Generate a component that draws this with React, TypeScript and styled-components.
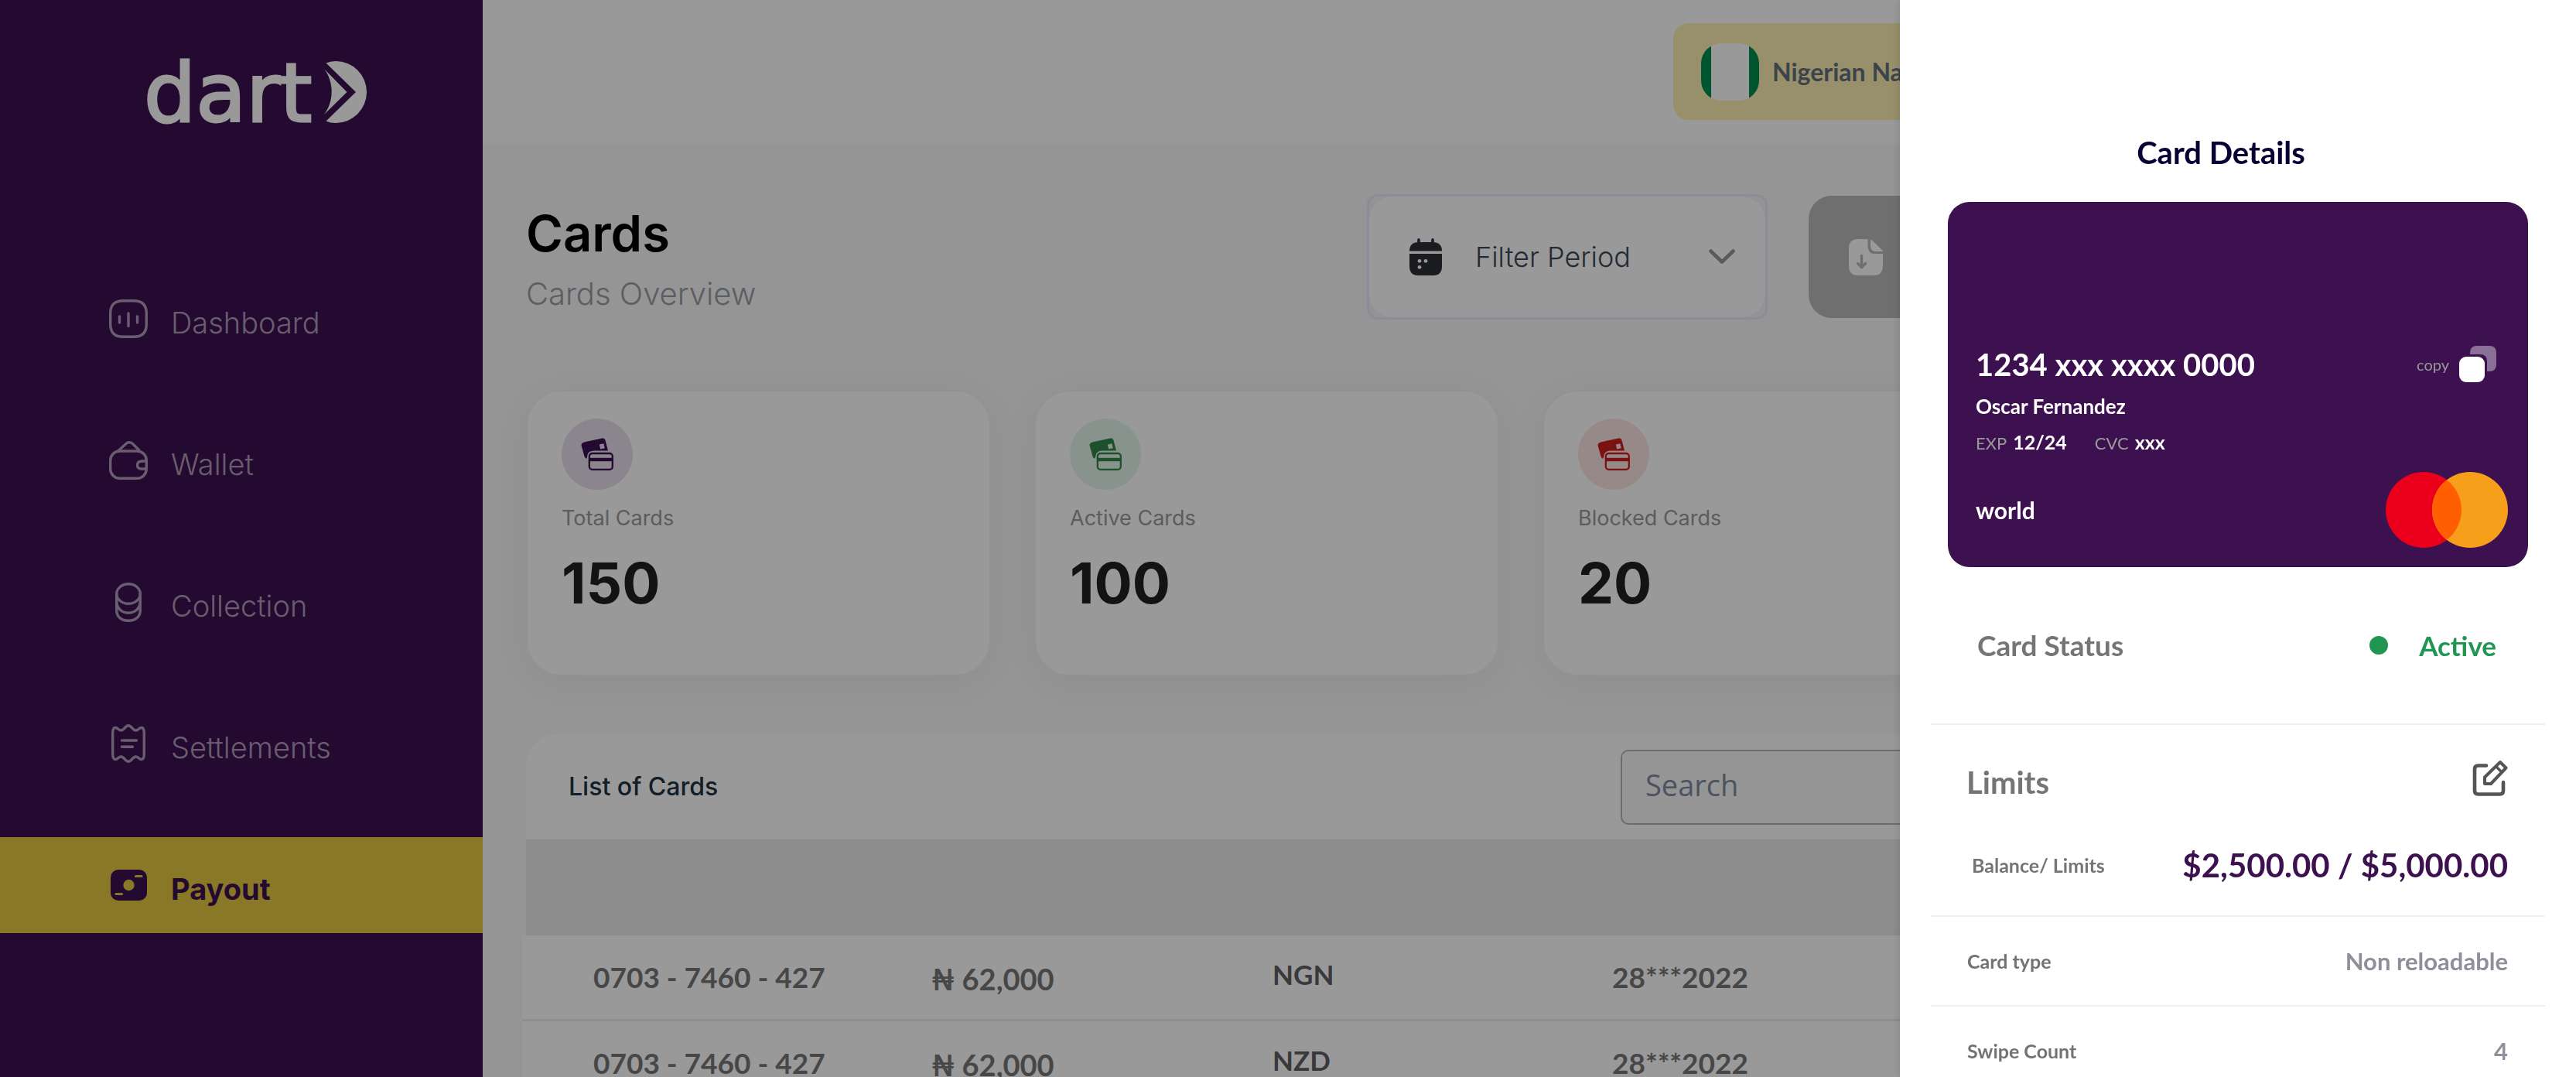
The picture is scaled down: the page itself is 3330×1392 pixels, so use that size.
import React from "react";
import styled, { createGlobalStyle } from "styled-components";

const purple = "#3d1150";
const ui = `Inter, "Liberation Sans", sans-serif`;
const geo = `Lato, "Liberation Sans", sans-serif`;

const GlobalStyle = createGlobalStyle`
  *, *::before, *::after { box-sizing: border-box; }
  body { margin: 0; font-family: ${ui}; background: #f8f8f8; }
  button, input, select { font: inherit; color: inherit; }
  h1, h2, h3, p, dl, dt, dd { margin: 0; font-weight: inherit; }
`;

const Shell = styled.div`
  display: flex;
  height: 100vh;
  overflow: hidden;
`;

/* Sidebar */

const Sidebar = styled.aside`
  flex: none;
  width: 624px;
  padding-top: 79px;
  background: ${purple};
`;

const Logo = styled.a`
  display: flex;
  gap: 16px;
  height: 84px;
  padding-left: 186px;
  color: #fff;
  text-decoration: none;
`;

const Wordmark = styled.span`
  font: 400 106px/84px "DejaVu Sans", sans-serif;
  -webkit-text-stroke: 3px #fff;
`;

const Nav = styled.nav`
  display: flex;
  flex-direction: column;
  gap: 59px;
  margin-top: 187px;
`;

const NavLink = styled.a<{ $active?: boolean }>`
  display: flex;
  align-items: center;
  gap: 30px;
  height: 124px;
  padding-left: 141px;
  font-size: 38px;
  font-weight: ${(p) => (p.$active ? 700 : 300)};
  line-height: 48px;
  text-decoration: none;
  color: ${(p) => (p.$active ? purple : "#b09dba")};
  background: ${(p) => (p.$active ? "#e3c844" : "transparent")};
`;

const NavIcon = styled.span`
  display: flex;
  justify-content: center;
  width: 50px;
`;

const NavLabel = styled.span`
  padding-top: 10px;
`;

/* Main column */

const Page = styled.div`
  flex: 1;
  min-width: 0;
`;

const TopBar = styled.header`
  display: flex;
  align-items: center;
  justify-content: flex-end;
  height: 185px;
  padding-right: 772px;
  background: #fff;
`;

const Currency = styled.button`
  display: flex;
  align-items: center;
  gap: 17px;
  width: 395px;
  height: 125px;
  padding: 0 36px;
  border: 0;
  border-radius: 20px;
  background: #fdf0b1;
  color: #67717d;
  font: 700 32px/40px ${geo};
`;

const Flag = styled.span`
  display: block;
  width: 75px;
  height: 74px;
  border-radius: 26px;
  background: linear-gradient(to right, #008e53 13px, #fff 13px 62px, #008e53 62px);
`;

const Main = styled.main`
  padding: 66px 78px 0 56px;
`;

const TitleRow = styled.div`
  display: grid;
  grid-template-columns: 1fr 518px 914px;
  column-gap: 53px;
  align-items: center;
`;

const Heading = styled.div`
  display: grid;
  gap: 16px;
  padding-top: 8px;
`;

const Title = styled.h1`
  font-size: 65px;
  font-weight: 600;
  line-height: 72px;
  color: #000;
`;

const Subtitle = styled.p`
  font-size: 40px;
  font-weight: 300;
  line-height: 52px;
  color: #989da3;
`;

const Filter = styled.label`
  height: 162px;
  border: 3px solid #e6e9fb;
  border-radius: 14px;
  background: #f6f6f8;
`;

const FilterInner = styled.span`
  display: flex;
  align-items: center;
  height: 100%;
  padding: 0 39px 0 52px;
  border-radius: 30px;
  background: #fff;
`;

const FilterSelect = styled.select`
  flex: 1;
  margin-left: 43px;
  padding: 0;
  border: 0;
  appearance: none;
  background: transparent;
  color: #3d4854;
  font-size: 36px;
  font-weight: 300;
  line-height: 48px;
`;

const Download = styled.button`
  display: flex;
  align-items: center;
  height: 158px;
  padding: 0 52px;
  border: 0;
  border-radius: 30px;
  background: #b9b9b9;
`;

const Stats = styled.section`
  display: grid;
  grid-template-columns: repeat(4, 1fr);
  gap: 56px;
  margin-top: 91px;
`;

const StatCard = styled.article`
  min-height: 370px;
  padding: 35px 44px;
  border: 2px solid #f4f4f4;
  border-radius: 46px;
  background: #fff;
  box-shadow: 0 8px 48px rgba(0, 0, 0, 0.05);
`;

const StatIcon = styled.div<{ $bg: string; $fg: string }>`
  display: grid;
  place-items: center;
  width: 92px;
  height: 92px;
  border-radius: 50%;
  background: ${(p) => p.$bg};
  color: ${(p) => p.$fg};
`;

const StatLabel = styled.h2`
  margin-top: 19px;
  font-size: 27px;
  line-height: 36px;
  color: #999;
`;

const StatValue = styled.p`
  margin-top: 22px;
  font-size: 73px;
  font-weight: 700;
  line-height: 88px;
  color: #231f20;
`;

const Panel = styled.section`
  margin-top: 75px;
  border-radius: 40px 40px 0 0;
  background: #fff;
`;

const PanelHead = styled.div`
  display: flex;
  align-items: center;
  justify-content: space-between;
  height: 136px;
  padding: 0 57px 0 55px;
`;

const PanelTitle = styled.h2`
  font-size: 32px;
  font-weight: 500;
  line-height: 40px;
  color: #213243;
`;

const Search = styled.input`
  width: 1100px;
  height: 97px;
  padding: 0 30px 6px;
  border: 2px solid #b5b5b5;
  border-radius: 10px;
  background: #f8f8f8;
  font: 400 38px/48px "Open Sans", sans-serif;
  &::placeholder {
    color: #7f8aa0;
    opacity: 1;
  }
`;

const HeadStrip = styled.div`
  height: 124px;
  border-top: 2px solid #e6ecf0;
  border-bottom: 3px solid #e8e8f0;
  background: #ebebeb;
`;

const Table = styled.table`
  width: calc(100% + 5px);
  margin-left: -5px;
  border-collapse: separate;
  border-spacing: 0;
  table-layout: fixed;
  background: #fff;
`;

const Col = styled.col`
  width: 439px;
`;

const Cell = styled.td`
  height: 111px;
  padding: 0 0 0 92px;
  border-bottom: 3px solid #efebf2;
  color: #777;
  font: 700 37px/48px ${geo};
  white-space: nowrap;
`;

const AmountCell = styled(Cell)`
  padding: 4px 0 0 90px;
  font-size: 38px;
`;

const CodeCell = styled(Cell)`
  padding-bottom: 8px;
  font-size: 35px;
  color: #5f5f67;
`;

/* Overlay and drawer */

const Scrim = styled.div`
  position: fixed;
  inset: 0;
  background: rgba(0, 0, 0, 0.4);
`;

const Drawer = styled.aside`
  position: fixed;
  top: 0;
  right: 0;
  bottom: 0;
  width: 874px;
  padding: 173px 40px 0;
  overflow: hidden;
  background: #fff;
  box-shadow: 0 0 12px rgba(0, 0, 0, 0.15);
  font-family: ${geo};
`;

const DrawerTitle = styled.h2`
  padding-right: 44px;
  text-align: center;
  font-size: 40px;
  font-weight: 700;
  line-height: 48px;
  color: #0a0033;
`;

const BankCard = styled.div`
  display: flex;
  flex-direction: column;
  justify-content: flex-end;
  height: 472px;
  margin: 40px 22px 0;
  padding: 0 26px 25px 36px;
  border-radius: 28px;
  background: ${purple};
  color: #fff;
`;

const CardRow = styled.div`
  display: flex;
  align-items: center;
  justify-content: space-between;
`;

const CardNumber = styled.p`
  font-size: 40px;
  font-weight: 700;
  line-height: 48px;
`;

const CopyButton = styled.button`
  display: flex;
  align-items: center;
  gap: 13px;
  height: 48px;
  margin-right: 15px;
  padding: 0;
  border: 0;
  background: none;
  color: #999;
  font-size: 20px;
  line-height: 24px;
`;

const Holder = styled.p`
  margin-top: 14px;
  font-size: 26px;
  font-weight: 700;
  line-height: 32px;
`;

const Codes = styled.dl`
  display: flex;
  gap: 36px;
  margin-top: 14px;
`;

const Code = styled.div`
  display: flex;
  align-items: baseline;
  gap: 8px;
  line-height: 32px;
`;

const CodeName = styled.dt`
  font-size: 22px;
  color: #999;
`;

const CodeValue = styled.dd`
  font-size: 25px;
  font-weight: 700;
`;

const BrandRow = styled.div`
  display: flex;
  align-items: center;
  justify-content: space-between;
  margin-top: 21px;
`;

const Tier = styled.span`
  font-size: 30px;
  font-weight: 700;
  line-height: 36px;
`;

const StatusRow = styled.div`
  display: flex;
  align-items: center;
  justify-content: space-between;
  height: 204px;
  padding: 0 63px 0 60px;
  border-bottom: 2px solid #eee;
  font-weight: 700;
  line-height: 48px;
`;

const StatusLabel = styled.h3`
  font-size: 37px;
  color: #757575;
`;

const StatusValue = styled.span`
  display: flex;
  align-items: center;
  gap: 40px;
  font-size: 35px;
  color: #219653;
  &::before {
    content: "";
    width: 24px;
    height: 24px;
    border-radius: 50%;
    background: currentColor;
  }
`;

const LimitsHead = styled.div`
  display: flex;
  align-items: center;
  justify-content: space-between;
  height: 136px;
  padding: 0 48px 0 46px;
`;

const LimitsTitle = styled.h3`
  padding-top: 12px;
  font-size: 40px;
  font-weight: 700;
  line-height: 48px;
  color: #757575;
`;

const EditButton = styled.button`
  display: flex;
  padding: 0;
  border: 0;
  background: none;
  color: #555;
`;

const Balance = styled.dl`
  display: flex;
  align-items: center;
  justify-content: space-between;
  height: 112px;
  padding: 0 48px 20px 53px;
  border-bottom: 2px solid #f1f1f1;
  line-height: 48px;
`;

const BalanceName = styled.dt`
  font-size: 25px;
  font-weight: 700;
  color: #757575;
`;

const BalanceValue = styled.dd`
  font-size: 42px;
  font-weight: 700;
  color: ${purple};
`;

const Detail = styled.dl`
  display: flex;
  align-items: center;
  justify-content: space-between;
  height: 116px;
  padding: 0 48px 0 47px;
  border-bottom: 2px solid #eee;
  line-height: 40px;
`;

const DetailName = styled.dt`
  font-size: 25px;
  font-weight: 700;
  color: #6f756f;
`;

const DetailValue = styled.dd`
  font-size: 31px;
  font-weight: 700;
  color: #8f8f9b;
`;

/* Drawings */

const line = {
  fill: "none",
  stroke: "currentColor",
  strokeWidth: 3.4,
  strokeLinecap: "round" as const,
  strokeLinejoin: "round" as const,
};

const LogoMark = () => (
  <svg width="55" height="80" viewBox="0 0 55 80" fill="currentColor" aria-hidden="true">
    <path d="M2.5 2.5Q8 0 15 0A40 40 0 0 1 15 80Q8 80 2.5 77.5L41 40Z" />
    <path d="M0 10L29.5 40L0 69C13 52 13 27 0 10Z" />
  </svg>
);

const DashboardIcon = () => (
  <svg width="50" height="50" viewBox="0 0 50 50" {...line}>
    <path d="M1.7 25V18Q1.7 1.7 18 1.7H32Q48.3 1.7 48.3 18V32Q48.3 48.3 32 48.3H18Q1.7 48.3 1.7 32Z" />
    <path d="M13.5 22V30M25 18V34.500M36.500 22V30" />
  </svg>
);

const WalletIcon = () => (
  <svg width="50" height="50" viewBox="0 0 50 50" {...line}>
    <rect x="1.7" y="13" width="46.600" height="35.300" rx="12" />
    <path d="M12 12.500L22 3.500Q26 0 30.500 3.500L38.500 11.500" />
    <path d="M48 26H42Q36.500 26.500 36.500 31.200Q36.500 35.800 42 36H48" />
  </svg>
);

const CollectionIcon = () => (
  <svg width="34" height="51" viewBox="0 0 34 51" {...line}>
    <ellipse cx="17" cy="14.500" rx="15.300" ry="12.800" />
    <path d="M1.700 14.500V36C1.700 44 8 49.300 17 49.300S32.300 44 32.300 36V14.500" />
    <path d="M1.700 25.500C2.500 34 9 39.200 17 39.200S31.500 34 32.300 25.500" />
  </svg>
);

const SettlementsIcon = () => (
  <svg width="44" height="50" viewBox="0 0 44 50" {...line}>
    <path d="M1.700 12Q1.700 4.500 5 4.500C8.500 4.500 9 8 12.500 8C16.500 8 18 1.700 22 1.700S27.500 8 31.500 8C35 8 35.500 4.500 39 4.500Q42.300 4.500 42.300 12V38Q42.300 45.500 39 45.500C35.500 45.500 35 42 31.500 42C27.500 42 26 48.300 22 48.300S16.500 42 12.500 42C9 42 8.500 45.500 5 45.500Q1.700 45.500 1.700 38Z" />
    <path d="M13.500 21H32.500M13.500 29.200H27.500" />
  </svg>
);

const PayoutIcon = () => (
  <svg width="47" height="40" viewBox="0 0 47 40" aria-hidden="true">
    <rect width="47" height="40" rx="10" fill="currentColor" />
    <circle cx="23.500" cy="20" r="7.200" fill="#e3c844" />
    <path d="M32.500 8.500H40M7 31.500H14.500" stroke="#e3c844" strokeWidth="3.200" strokeLinecap="round" />
  </svg>
);

const CalendarIcon = () => (
  <svg width="42" height="48" viewBox="0 0 42 48" aria-hidden="true">
    <path d="M12 1.800V8M30 1.800V8" stroke="#2d2f36" strokeWidth="3.600" strokeLinecap="round" />
    <path d="M0 16.500Q0 5 12 5H30Q42 5 42 16.500ZM0 20H42V36Q42 48 31 48H11Q0 48 0 36Z" fill="#2d2f36" />
    <circle cx="13" cy="29.300" r="2.400" fill="#fff" />
    <circle cx="21" cy="29.300" r="2.400" fill="#fff" />
    <circle cx="13" cy="37.300" r="2.400" fill="#fff" />
  </svg>
);

const ChevronIcon = () => (
  <svg width="34" height="20" viewBox="0 0 34 20" aria-hidden="true">
    <path d="M2.500 2.500L17 16.500L31.500 2.500" fill="none" stroke="#969696" strokeWidth="4.600" strokeLinecap="round" strokeLinejoin="round" />
  </svg>
);

const DownloadIcon = () => (
  <svg width="44" height="47" viewBox="0 0 44 47" aria-hidden="true">
    <path d="M12 0H24.500V9Q24.500 19 34 19H44V34Q44 47 32 47H12Q0 47 0 35V12Q0 0 12 0Z" fill="#fff" />
    <path d="M28 2Q28 0 30 1.500L43.500 14.500Q44.500 16 42.500 16H35Q28 16 28 9Z" fill="#fff" />
    <path d="M16.500 21.500V35.500M11.500 31.500L16.500 36.500L21.500 31.500" fill="none" stroke="#b9b9b9" strokeWidth="3.400" strokeLinecap="round" strokeLinejoin="round" />
  </svg>
);

const CardsIcon = () => (
  <svg width="42" height="42" viewBox="0 0 42 42" aria-hidden="true">
    <path
      fill="currentColor"
      fillRule="evenodd"
      d="M5 5.200L27 .4Q30.600 -.2 31.500 3L35 16.500H17Q8.500 16.500 8 25L7 27Q5 25.500 4.500 24L.6 10Q0 6.400 5 5.200ZM23.800 8.500L25.200 14.500L30.800 13.200L29.300 7.200Z"
    />
    <rect x="10.800" y="20" width="30" height="20.800" rx="3.800" fill="none" stroke="currentColor" strokeWidth="2.300" />
    <path d="M10.800 28H40.800" stroke="currentColor" strokeWidth="4.400" />
  </svg>
);

const CopyIcon = () => (
  <svg width="48" height="48" viewBox="0 0 48 48" aria-hidden="true">
    <path d="M23 0H39Q48 0 48 9V24Q48 33 39 33H36V20Q36 11 27 11H14V9Q14 0 23 0Z" fill="#fff" fillOpacity=".4" />
    <rect y="14" width="33" height="33" rx="9" fill="#fff" />
  </svg>
);

const MastercardIcon = () => (
  <svg width="158" height="98" viewBox="0 0 158 98" role="img" aria-label="Mastercard">
    <circle cx="49" cy="49" r="49" fill="#eb001b" />
    <circle cx="109" cy="49" r="49" fill="#f79e1b" />
    <path d="M79 10.300A49 49 0 0 1 79 87.700A49 49 0 0 1 79 10.300Z" fill="#ff5f00" />
  </svg>
);

const EditIcon = () => (
  <svg width="46" height="47" viewBox="0 0 46 47" fill="none" stroke="currentColor" strokeWidth="4.600" strokeLinejoin="round" aria-hidden="true">
    <path d="M18 7.500H7.500Q3 7.500 3 12V40Q3 44.500 7.500 44.500H35.500Q40 44.500 40 40V29" strokeLinecap="round" />
    <path d="M16 31V22.500L36 3L43.500 10.500L24 31Z" strokeWidth="4" />
    <path d="M30.500 8.500L38 16" strokeWidth="3.400" />
  </svg>
);

/* Data */

const navItems = [
  { label: "Dashboard", Icon: DashboardIcon },
  { label: "Wallet", Icon: WalletIcon },
  { label: "Collection", Icon: CollectionIcon },
  { label: "Settlements", Icon: SettlementsIcon },
  { label: "Payout", Icon: PayoutIcon, active: true },
];

const stats = [
  { label: "Total Cards", value: "150", bg: "#e8e0eb", fg: purple },
  { label: "Active Cards", value: "100", bg: "#e5f6ec", fg: "#318548" },
  { label: "Blocked Cards", value: "20", bg: "#fde4e4", fg: "#cb1f1f" },
];

const rows = [
  { id: "0703 - 7460 - 427", amount: "₦ 62,000", code: "NGN", date: "28***2022" },
  { id: "0703 - 7460 - 427", amount: "₦ 62,000", code: "NZD", date: "28***2022" },
];

const details = [
  { name: "Card type", value: "Non reloadable" },
  { name: "Swipe Count", value: "4" },
];

export default function App() {
  return (
    <>
      <GlobalStyle />
      <Shell>
        <Sidebar>
          <Logo href="#">
            <Wordmark>dart</Wordmark>
            <LogoMark />
          </Logo>
          <Nav>
            {navItems.map(({ label, Icon, active }) => (
              <NavLink key={label} href="#" $active={active}>
                <NavIcon>
                  <Icon />
                </NavIcon>
                <NavLabel>{label}</NavLabel>
              </NavLink>
            ))}
          </Nav>
        </Sidebar>

        <Page>
          <TopBar>
            <Currency type="button">
              <Flag />
              Nigerian Naira
            </Currency>
          </TopBar>
          <Main>
            <TitleRow>
              <Heading>
                <Title>Cards</Title>
                <Subtitle>Cards Overview</Subtitle>
              </Heading>
              <Filter>
                <FilterInner>
                  <CalendarIcon />
                  <FilterSelect aria-label="Filter Period" defaultValue="all">
                    <option value="all">Filter Period</option>
                  </FilterSelect>
                  <ChevronIcon />
                </FilterInner>
              </Filter>
              <Download type="button" aria-label="Download">
                <DownloadIcon />
              </Download>
            </TitleRow>

            <Stats>
              {stats.map((s) => (
                <StatCard key={s.label}>
                  <StatIcon $bg={s.bg} $fg={s.fg}>
                    <CardsIcon />
                  </StatIcon>
                  <StatLabel>{s.label}</StatLabel>
                  <StatValue>{s.value}</StatValue>
                </StatCard>
              ))}
            </Stats>

            <Panel>
              <PanelHead>
                <PanelTitle>List of Cards</PanelTitle>
                <Search type="search" placeholder="Search" aria-label="Search" />
              </PanelHead>
              <HeadStrip />
              <Table>
                <colgroup>
                  <Col />
                  <Col />
                  <Col />
                  <col />
                </colgroup>
                <tbody>
                  {rows.map((r) => (
                    <tr key={r.code}>
                      <Cell>{r.id}</Cell>
                      <AmountCell>{r.amount}</AmountCell>
                      <CodeCell>{r.code}</CodeCell>
                      <Cell>{r.date}</Cell>
                    </tr>
                  ))}
                </tbody>
              </Table>
            </Panel>
          </Main>
        </Page>
      </Shell>

      <Scrim />

      <Drawer>
        <DrawerTitle>Card Details</DrawerTitle>
        <BankCard>
          <CardRow>
            <CardNumber>1234 xxx xxxx 0000</CardNumber>
            <CopyButton type="button">
              copy
              <CopyIcon />
            </CopyButton>
          </CardRow>
          <Holder>Oscar Fernandez</Holder>
          <Codes>
            <Code>
              <CodeName>EXP</CodeName>
              <CodeValue>12/24</CodeValue>
            </Code>
            <Code>
              <CodeName>CVC</CodeName>
              <CodeValue>xxx</CodeValue>
            </Code>
          </Codes>
          <BrandRow>
            <Tier>world</Tier>
            <MastercardIcon />
          </BrandRow>
        </BankCard>
        <StatusRow>
          <StatusLabel>Card Status</StatusLabel>
          <StatusValue>Active</StatusValue>
        </StatusRow>
        <LimitsHead>
          <LimitsTitle>Limits</LimitsTitle>
          <EditButton type="button" aria-label="Edit limits">
            <EditIcon />
          </EditButton>
        </LimitsHead>
        <Balance>
          <BalanceName>Balance/ Limits</BalanceName>
          <BalanceValue>$2,500.00 / $5,000.00</BalanceValue>
        </Balance>
        {details.map((d) => (
          <Detail key={d.name}>
            <DetailName>{d.name}</DetailName>
            <DetailValue>{d.value}</DetailValue>
          </Detail>
        ))}
      </Drawer>
    </>
  );
}
